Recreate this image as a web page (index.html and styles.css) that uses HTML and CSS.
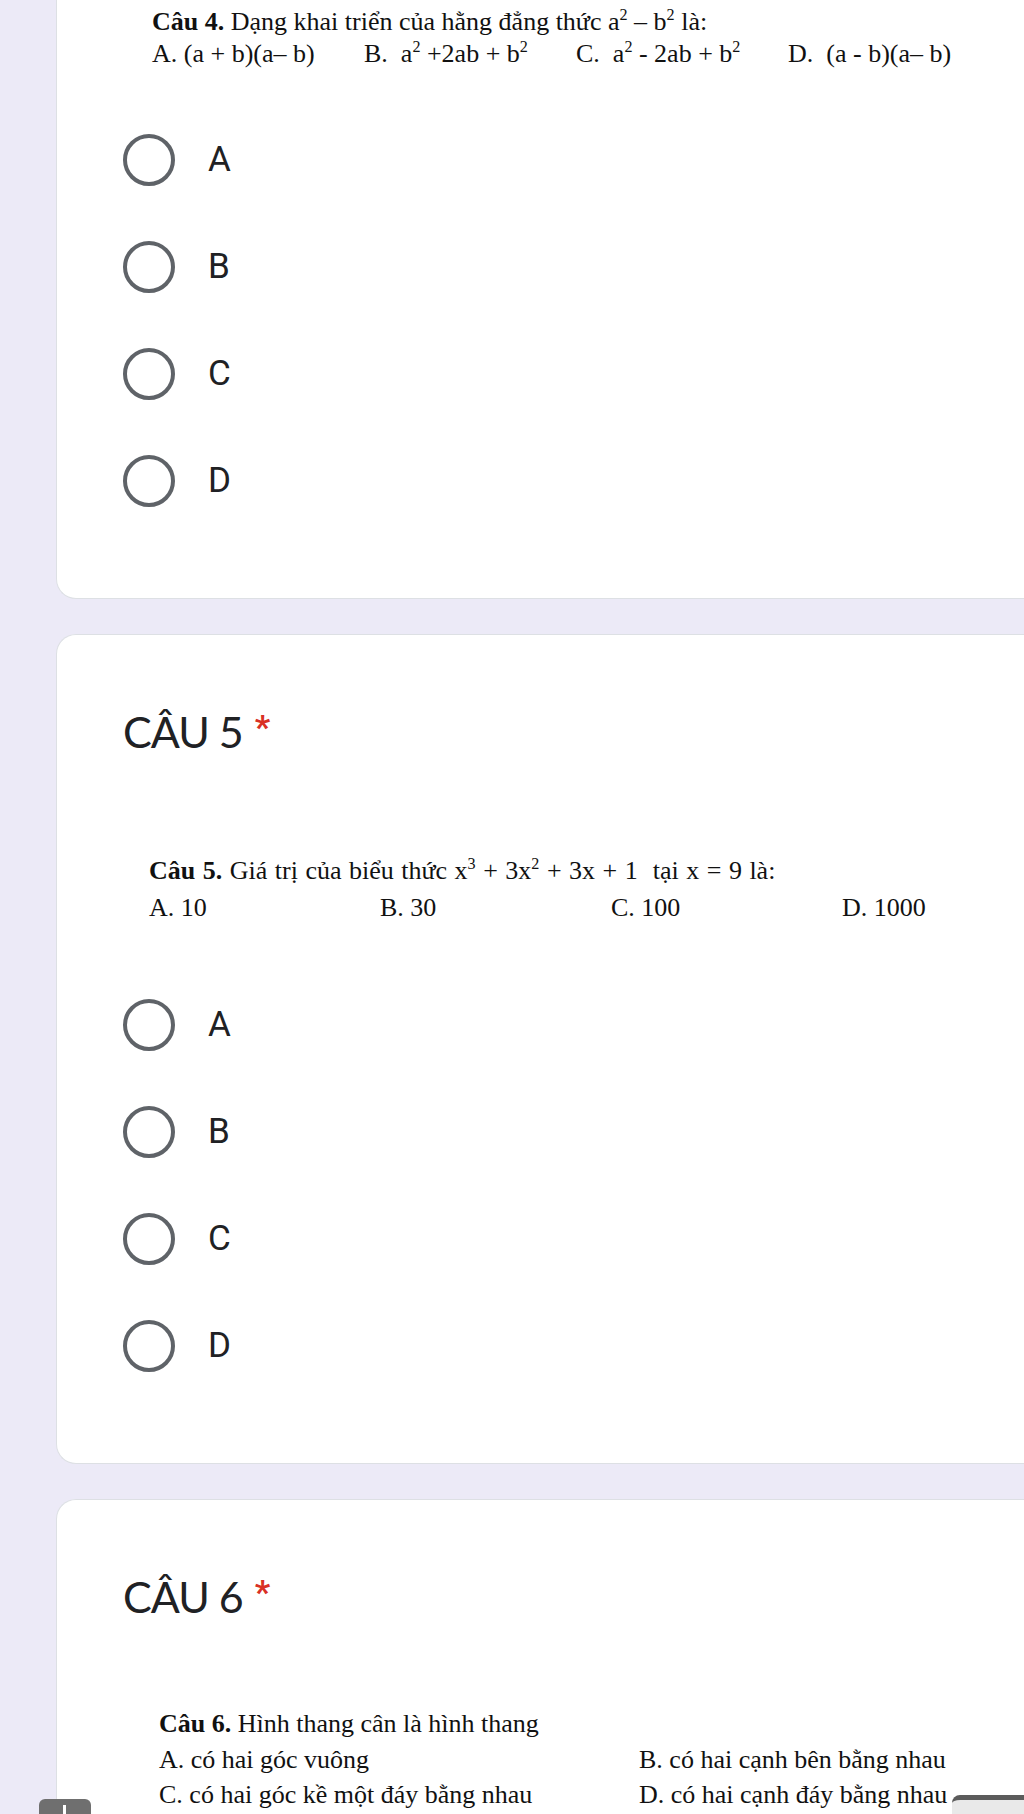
FILE: index.html
```html
<!DOCTYPE html>
<html lang="vi">
<head>
    <meta charset="UTF-8">
    <meta name="viewport" content="width=device-width, initial-scale=1.0">
    <title>Bài kiểm tra</title>
    <link rel="stylesheet" href="styles.css">
</head>
<body>
    <main class="form">
        <section class="card card-first">
            <div class="doc q4">
                <p><b>Câu 4.</b> Dạng khai triển của hằng đẳng thức a<sup>2</sup> – b<sup>2</sup> là:</p>
                <div class="choices cols-4">
                    <span>A. (a + b)(a– b)</span>
                    <span>B.&nbsp; a<sup>2</sup> +2ab + b<sup>2</sup></span>
                    <span>C.&nbsp; a<sup>2</sup> - 2ab + b<sup>2</sup></span>
                    <span>D.&nbsp; (a - b)(a– b)</span>
                </div>
            </div>
            <div class="options">
                <label class="option"><span class="radio"></span><span class="opt-text">A</span></label>
                <label class="option"><span class="radio"></span><span class="opt-text">B</span></label>
                <label class="option"><span class="radio"></span><span class="opt-text">C</span></label>
                <label class="option"><span class="radio"></span><span class="opt-text">D</span></label>
            </div>
        </section>

        <section class="card">
            <h2 class="title">CÂU 5<span class="req">*</span></h2>
            <div class="doc q5">
                <p><b>Câu 5.</b> Giá trị của biểu thức x<sup>3</sup> + 3x<sup>2</sup> + 3x + 1 &nbsp;tại x = 9 là:</p>
                <div class="choices cols-4 wide">
                    <span>A. 10</span>
                    <span>B. 30</span>
                    <span>C. 100</span>
                    <span>D. 1000</span>
                </div>
            </div>
            <div class="options">
                <label class="option"><span class="radio"></span><span class="opt-text">A</span></label>
                <label class="option"><span class="radio"></span><span class="opt-text">B</span></label>
                <label class="option"><span class="radio"></span><span class="opt-text">C</span></label>
                <label class="option"><span class="radio"></span><span class="opt-text">D</span></label>
            </div>
        </section>

        <section class="card card-last">
            <h2 class="title">CÂU 6<span class="req">*</span></h2>
            <div class="doc q6">
                <p><b>Câu 6.</b> Hình thang cân là hình thang</p>
                <div class="choices cols-2">
                    <span>A. có hai góc vuông</span>
                    <span>B. có hai cạnh bên bằng nhau</span>
                    <span>C. có hai góc kề một đáy bằng nhau</span>
                    <span>D. có hai cạnh đáy bằng nhau</span>
                </div>
            </div>
        </section>
    </main>

    <div class="fab-stub"></div>
    <div class="sheet-stub"></div>
</body>
</html>
```

FILE: styles.css
```css
body {
    margin: 0;
    height: 1814px;
    overflow: hidden;
    position: relative;
    background-color: #eceaf7;
    color: #202124;
    font-family: Roboto, "Noto Sans", sans-serif;
}
.form {
    padding-left: 56px;
}
.card {
    background-color: #fff;
    border: 1px solid #dde0e4;
    border-right: none;
    border-radius: 20px 0 0 20px;
    margin-bottom: 35px;
    padding: 66px 0 64px 66px;
}
.card-first {
    border-top: none;
    border-top-left-radius: 0;
    padding-top: 6px;
}
.card-last {
    min-height: 400px;
}
.title {
    margin: 0;
    font-family: Lato, "Open Sans", sans-serif;
    font-weight: 400;
    font-size: 43px;
    line-height: 52px;
    letter-spacing: -1px;
    color: #202124;
}
.req {
    margin-left: 12px;
    font-family: Roboto, sans-serif;
    font-size: 34px;
    font-weight: 700;
    vertical-align: 9px;
    color: #d93025;
}

/* pasted question text (Word style) */
.doc {
    font-family: "Liberation Serif", "Times New Roman", serif;
    font-size: 26px;
    line-height: 32px;
    color: #111;
}
.doc p {
    margin: 0;
}
.doc sup {
    font-size: 0.62em;
    line-height: 0;
}
.choices {
    display: grid;
}
.cols-4 {
    grid-template-columns: repeat(4, 212px);
}
.cols-4.wide {
    grid-template-columns: repeat(4, 231px);
}
.cols-2 {
    grid-template-columns: 480px auto;
}
.q4 {
    margin-left: 29px;
}
.q5 {
    margin: 94px 0 0 26px;
    line-height: 37px;
}
.q5 p {
    word-spacing: 1px;
}
.q6 {
    margin: 83px 0 0 36px;
    line-height: 35.5px;
}

/* radio list */
.options {
    margin-top: 36px;
}
.q5 + .options {
    margin-top: 45px;
}
.option {
    display: flex;
    align-items: center;
    height: 107px;
}
.radio {
    box-sizing: border-box;
    width: 52px;
    height: 52px;
    border: 4.5px solid #5f6368;
    border-radius: 50%;
}
.opt-text {
    margin-left: 33px;
    font-size: 35px;
    color: #202124;
}

/* bits of phone UI over the page */
.fab-stub {
    position: absolute;
    left: 39px;
    bottom: 0;
    width: 52px;
    height: 15px;
    background-color: #6f6f6f;
    border-radius: 6px 6px 0 0;
}
.fab-stub::after {
    content: "";
    position: absolute;
    left: 24px;
    bottom: 0;
    width: 3px;
    height: 9px;
    background-color: #fff;
}
.sheet-stub {
    position: absolute;
    right: 0;
    bottom: 0;
    width: 72px;
    height: 14px;
    background-color: #e9e9e9;
    border-top: 5px solid #5b5b5b;
    border-top-left-radius: 8px;
}
```
